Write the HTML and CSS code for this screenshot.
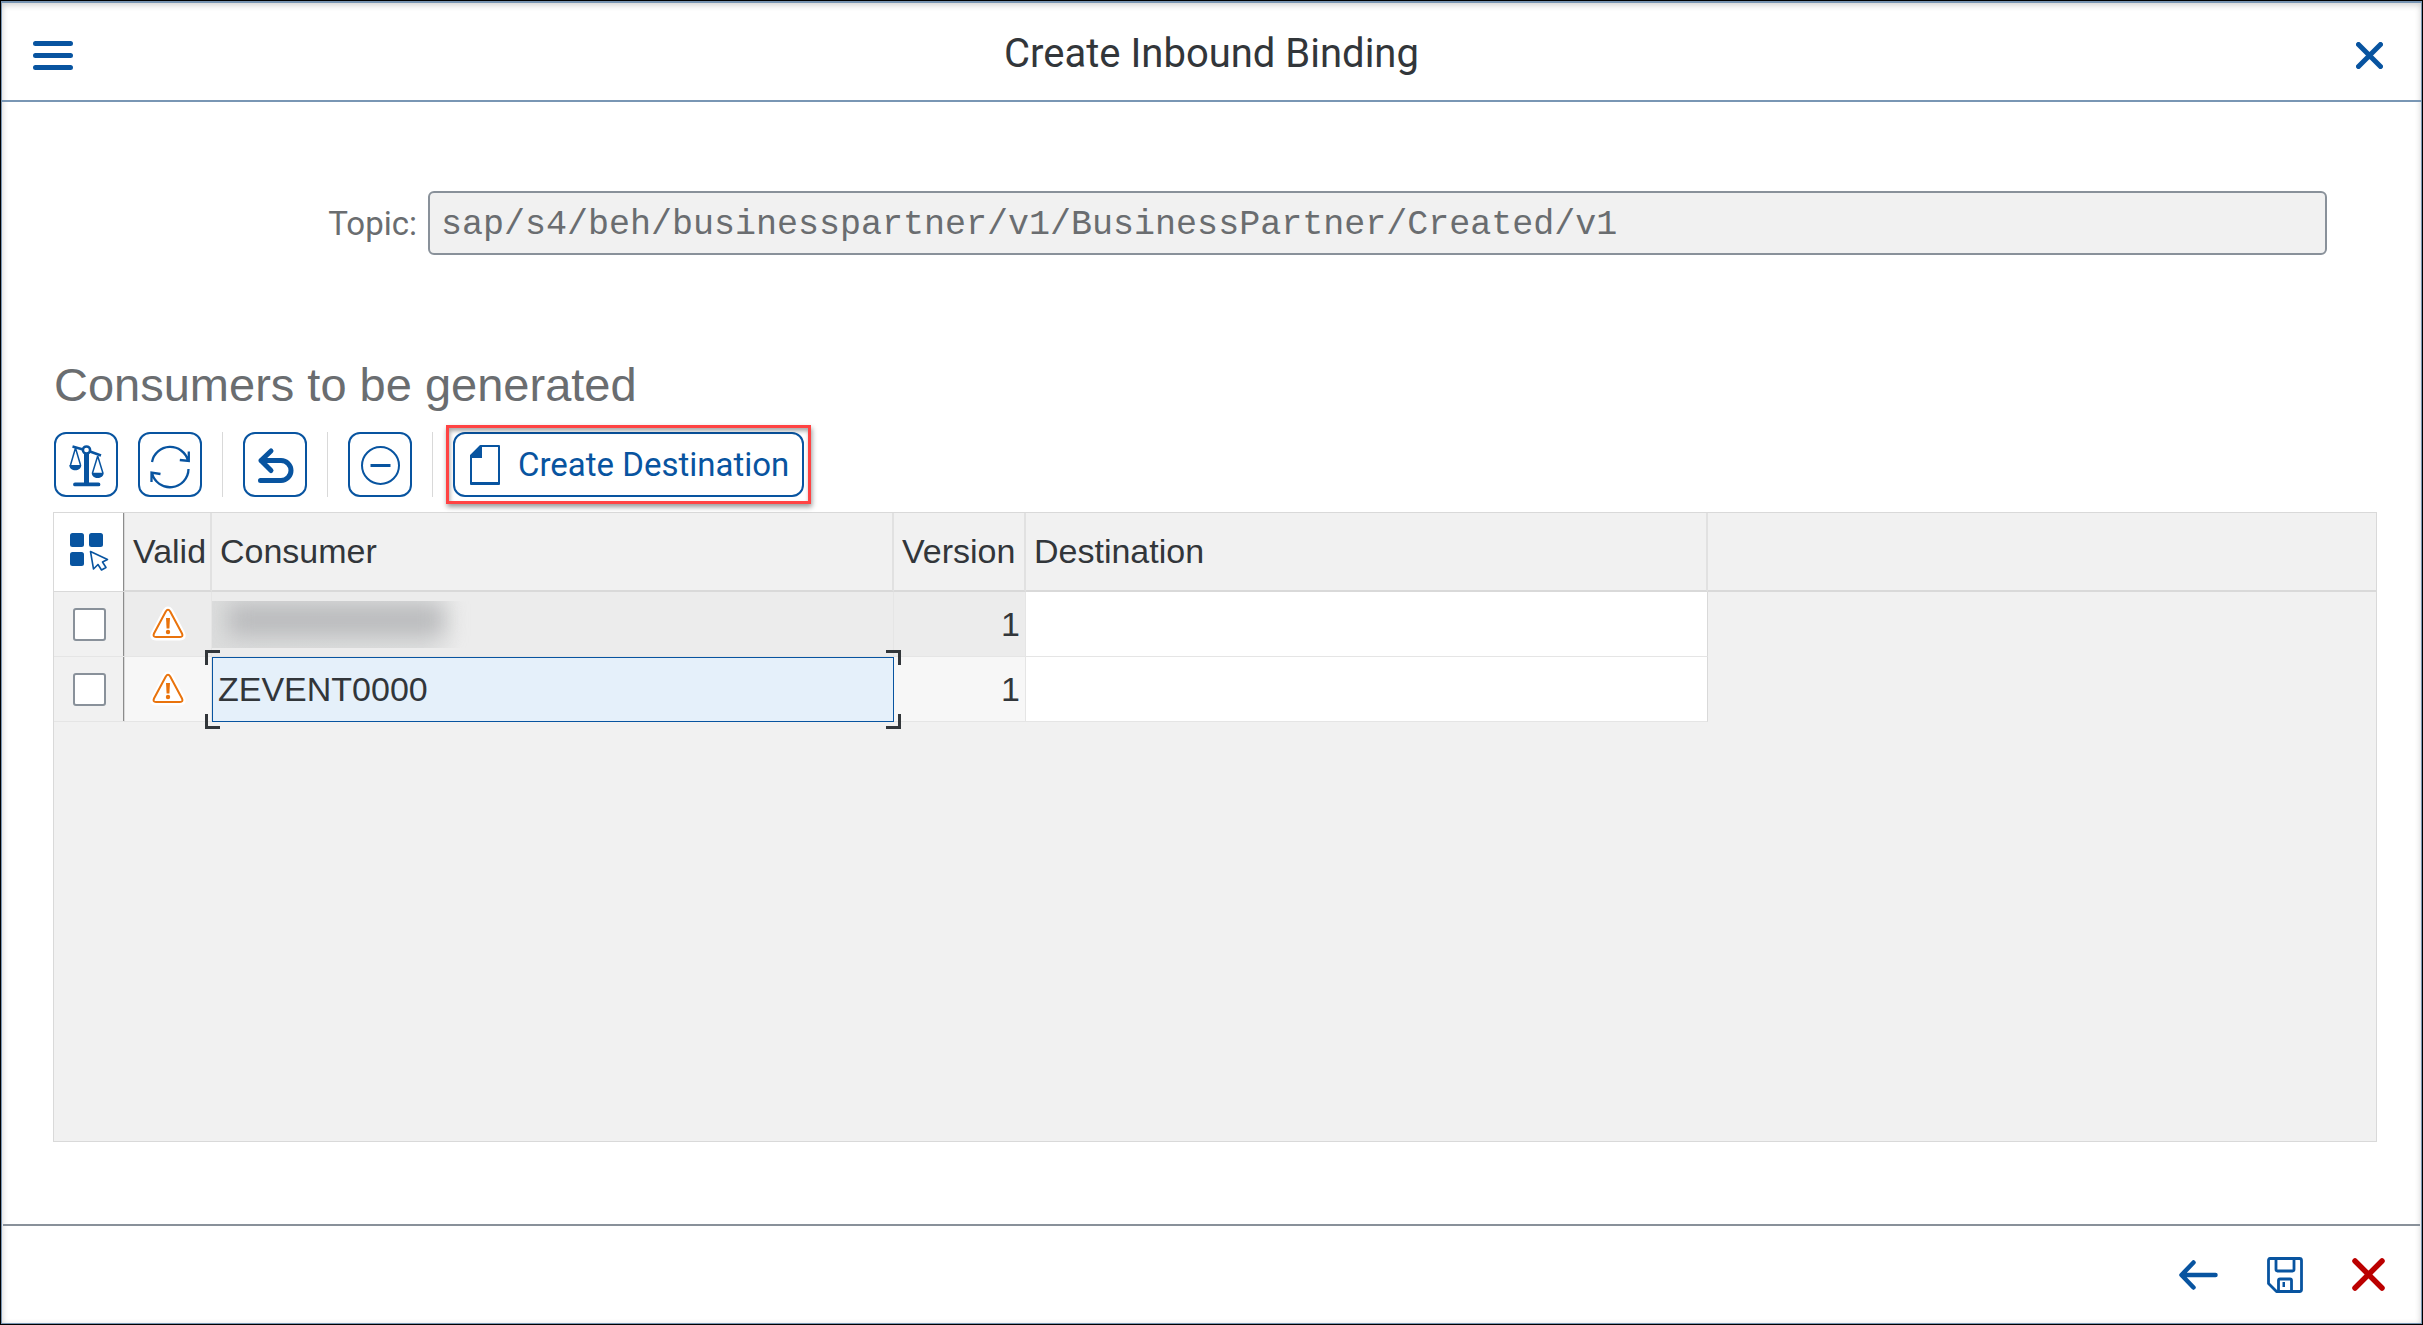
FILE: index.html
```html
<!DOCTYPE html>
<html lang="en">
<head>
<meta charset="utf-8">
<title>Create Inbound Binding</title>
<link rel="stylesheet" href="styles.css">
</head>
<body>
<div class="dialog">
  <header class="dialog-header">
    <button class="icon-button" type="button" aria-label="Menu">
      <svg width="40" height="29" viewBox="0 0 40 29"><path d="M2.5 2.5h35M2.5 14.5h35M2.5 26.5h35" fill="none" stroke="currentColor" stroke-width="5" stroke-linecap="round"/></svg>
    </button>
    <h1 class="dialog-title">Create Inbound Binding</h1>
    <button class="icon-button close" type="button" aria-label="Close">
      <svg width="27" height="27" viewBox="0 0 27 27"><path d="M2.5 2.5l22 22M24.5 2.5l-22 22" fill="none" stroke="currentColor" stroke-width="5" stroke-linecap="round"/></svg>
    </button>
  </header>

  <main class="dialog-body">
    <div class="field">
      <label class="field-label" for="topic">Topic:</label>
      <input class="field-input" id="topic" type="text" readonly value="sap/s4/beh/businesspartner/v1/BusinessPartner/Created/v1">
    </div>

    <h2 class="section-title">Consumers to be generated</h2>

    <div class="toolbar">
      <button class="tool" type="button" aria-label="Check">
        <svg width="60" height="61" viewBox="0 0 60 61"><g fill="none" stroke="currentColor" stroke-width="1.5"><circle cx="30.5" cy="16" r="3.600" stroke-width="2.5"/><path d="M16.5 12.5l10.5 3M34 17.5l11 4" stroke-width="2.5"/><path d="M19.5 14l-5 17M19.5 14l5 17M41.7 22l-5.2 17M41.7 22l5.2 17"/></g><path fill="currentColor" d="M28 20h5v29h-5zM19 48.5h23.500a1.900 1.900 0 0 1 0 3.800H19a1.900 1.900 0 0 1 0-3.800zM13.300 31h12c0 7-12 7-12 0zM35.700 38.700h12c0 7-12 7-12 0z"/></svg>
      </button>
      <button class="tool" type="button" aria-label="Refresh">
        <svg width="60" height="61" viewBox="0 0 60 61"><path fill="none" stroke="currentColor" stroke-width="2.300" d="M12 28a18.500 18.500 0 0 1 36-1.500M48.800 17.500v9.500l-9-1M48.500 35a18.500 18.500 0 0 1-36.500 4M11.500 48v-9.500l9 1.500"/></svg>
      </button>
      <span class="divider"></span>
      <button class="tool" type="button" aria-label="Undo">
        <svg width="60" height="61" viewBox="0 0 60 61"><path fill="none" stroke="currentColor" stroke-width="5" stroke-linecap="round" stroke-linejoin="round" d="M26 17L16 26.500l10 10M16 26.500h20a9.800 9.800 0 0 1 0 20H15.500"/></svg>
      </button>
      <span class="divider"></span>
      <button class="tool" type="button" aria-label="Remove">
        <svg width="60" height="61" viewBox="0 0 60 61"><g fill="none" stroke="currentColor"><circle cx="30.500" cy="31.500" r="18.500" stroke-width="2"/><path d="M20.500 31.500h20" stroke-width="3"/></g></svg>
      </button>
      <span class="divider"></span>
      <div class="highlight">
        <button class="tool tool-text" type="button">
          <svg width="30" height="40" viewBox="0 0 30 40"><path fill="none" stroke="currentColor" stroke-width="2" stroke-linejoin="round" d="M10.500 1H29v38H1V10.500z"/><path fill="currentColor" d="M10 1h2v12H1v-3zM1 37h28v3H1z"/></svg>
          Create Destination
        </button>
      </div>
    </div>

    <div class="grid">
      <table class="table">
        <colgroup>
          <col class="col-select"><col class="col-valid"><col class="col-wide"><col class="col-version"><col class="col-wide"><col>
        </colgroup>
        <thead>
          <tr>
            <th class="select">
              <button class="select-all" type="button" aria-label="Select all">
                <svg width="40" height="40" viewBox="0 0 40 40"><g fill="currentColor"><rect x="1" y="1" width="14" height="14" rx="2.500"/><rect x="20" y="1" width="14" height="14" rx="2.500"/><rect x="1" y="20" width="14" height="14" rx="2.500"/></g><path fill="none" stroke="currentColor" stroke-width="1.600" stroke-linejoin="round" d="M21.500 19.500L38.500 27.500l-5 2.500 3.500 5.500-4.500 2.500-3.500-5.500-4.500 4.500z"/></svg>
              </button>
            </th>
            <th>Valid</th>
            <th>Consumer</th>
            <th>Version</th>
            <th>Destination</th>
            <th class="filler"></th>
          </tr>
        </thead>
        <tbody>
          <tr class="row-odd">
            <td class="select"><input class="check" type="checkbox" aria-label="Select row 1"></td>
            <td class="status"><svg class="warning" width="36" height="36" viewBox="0 0 36 36" role="img" aria-label="Warning"><use href="#warning-shape"/></svg></td>
            <td class="redacted"><div class="smudge"></div></td>
            <td class="number">1</td>
            <td class="editable"></td>
            <td class="filler"></td>
          </tr>
          <tr class="row-even">
            <td class="select"><input class="check" type="checkbox" aria-label="Select row 2"></td>
            <td class="status">
              <svg class="warning" width="36" height="36" viewBox="0 0 36 36" role="img" aria-label="Warning"><g id="warning-shape"><path d="M15.500 5.500Q18 1.500 20.500 5.500L32 27.500Q34 31.500 30 31.500H6Q2 31.500 4 27.500Z" fill="#fff" stroke="#fff" stroke-width="6"/><path d="M15.800 5.500Q18 2 20.200 5.500L32 27.500Q33.500 31 30 31H6Q2.500 31 4 27.500Z" fill="#fff" stroke="#e9730c" stroke-width="2"/><path d="M16 12h4l-.6 10.500h-2.800z" fill="#e9730c"/><circle cx="18" cy="26" r="2.200" fill="#e9730c"/></g></svg>
            </td>
            <td class="focused"><span class="corners-top"></span>ZEVENT0000<span class="corners-bottom"></span></td>
            <td class="number">1</td>
            <td class="editable"></td>
            <td class="filler"></td>
          </tr>
        </tbody>
      </table>
    </div>
  </main>

  <footer class="dialog-footer">
    <button class="icon-button" type="button" aria-label="Back">
      <svg width="39" height="30" viewBox="0 0 39 30"><path d="M36.500 15H3M14.500 2.500L2.500 15l12 12.500" fill="none" stroke="currentColor" stroke-width="4.500" stroke-linecap="round" stroke-linejoin="round"/></svg>
    </button>
    <button class="icon-button" type="button" aria-label="Save">
      <svg width="36" height="36" viewBox="0 0 36 36"><path fill="none" stroke="currentColor" stroke-width="2.800" stroke-linejoin="round" d="M3 1.500h29.500q2 0 2 2v29q0 2-2 2H9.500l-8-8V3.500q0-2 1.500-2zM9 2v10.500q0 1.500 1.500 1.500h15q1.500 0 1.500-1.500V2M11.500 34V23.500q0-1.500 1.500-1.500h10q1.500 0 1.500 1.500V34"/><path fill="currentColor" d="M15.500 25h2.500v5h-2.500z"/></svg>
    </button>
    <button class="icon-button cancel" type="button" aria-label="Cancel">
      <svg width="33" height="33" viewBox="0 0 33 33"><path d="M3 3l27 27M30 3L3 30" fill="none" stroke="currentColor" stroke-width="5.500" stroke-linecap="round"/></svg>
    </button>
  </footer>
</div>
</body>
</html>
```
FILE: styles.css
```css
* {
  box-sizing: border-box;
}

body {
  margin: 0;
  background: #000;
  padding: 1px;
  font-family: "Liberation Sans", Arial, sans-serif;
  font-size: 34px;
  color: #32363a;
}

button {
  margin: 0;
  padding: 0;
  border: 0;
  background: none;
  color: #0854a0;
  font: inherit;
}

svg {
  display: block;
}

.dialog {
  display: flex;
  flex-direction: column;
  min-height: calc(100vh - 2px);
  border: 1px solid #7996b4;
  border-top-width: 2px;
  background: #fff;
  box-shadow: inset 0 2px 6px rgba(0, 0, 0, 0.2);
}

.dialog-header {
  display: grid;
  grid-template-columns: 1fr auto 1fr;
  align-items: center;
  height: 99px;
  padding: 8px 31px 0;
  border-bottom: 2px solid #7996b4;
}

.icon-button {
  justify-self: start;
}

.close {
  justify-self: end;
  padding: 0 7px;
}

.dialog-title {
  margin: 0;
  padding-bottom: 4px;
  font: 400 40px/48px Roboto, sans-serif;
}

.dialog-body {
  display: flex;
  flex: 1;
  flex-direction: column;
  padding: 89px 44px 82px 51px;
}

.field {
  display: grid;
  grid-template-columns: 364px 1fr;
  gap: 11px;
  align-items: center;
  padding-right: 50px;
}

.field-label {
  text-align: right;
  font-family: Roboto, sans-serif;
  font-size: 33px;
  color: #6a6d70;
}

.field-input {
  width: 100%;
  height: 64px;
  padding: 3px 11px 0;
  border: 2px solid #89919a;
  border-radius: 6px;
  outline: 0;
  background: #f1f1f1;
  color: #6a6d70;
  font: 35px "Liberation Mono", "Courier New", monospace;
}

.section-title {
  margin: 102px 0 19px 1px;
  font-size: 47px;
  line-height: 56px;
  font-weight: 400;
  color: #6a6d70;
}

.toolbar {
  display: flex;
  gap: 20px;
  height: 65px;
  margin: 0 0 15px 1px;
}

.tool {
  width: 64px;
  height: 65px;
  border: 2px solid #0854a0;
  border-radius: 12px;
  background: #fff;
}

.divider {
  width: 1px;
  background: #d9d9d9;
}

.tool-text {
  display: flex;
  align-items: center;
  gap: 18px;
  width: auto;
  padding: 0 13px 0 15px;
  font-family: Roboto, sans-serif;
  font-size: 33px;
}

.highlight {
  position: relative;
}

.highlight::after {
  content: "";
  position: absolute;
  inset: -7px;
  border: 3px solid #ff4343;
  box-shadow: 1px 3px 5px rgba(0, 0, 0, 0.4), inset 1px 3px 4px rgba(0, 0, 0, 0.35);
  pointer-events: none;
}

.grid {
  flex: 1;
  border: 1px solid #d9d9d9;
  background: #f1f1f1;
}

.table {
  width: 100%;
  table-layout: fixed;
  border-collapse: separate;
  border-spacing: 0;
}

.col-select {
  width: 71px;
}

.col-valid {
  width: 87px;
}

.col-wide {
  width: 682px;
}

.col-version {
  width: 132px;
}

th {
  height: 79px;
  padding: 0 0 0 8px;
  border-right: 2px solid #e1e1e1;
  border-bottom: 2px solid #d9d9d9;
  text-align: left;
  font-weight: 400;
}

td {
  height: 65px;
  padding: 0;
  border-right: 1px solid #e5e5e5;
  border-bottom: 1px solid #e5e5e5;
}

.select {
  padding: 0;
  border-right: 1px solid #d9d9d9;
  box-shadow: inset -1px 0 #8c8c8c;
}

th.select {
  border-bottom-width: 1px;
  background: #fff;
}

.select-all {
  display: block;
  margin: 0 auto;
}

.check {
  display: block;
  width: 33px;
  height: 33px;
  margin: 0 auto;
  border: 2px solid #89919a;
  border-radius: 3px;
  background: #fff;
  appearance: none;
}

.warning {
  margin: 0 auto;
}

.row-odd td {
  background: #ececec;
}

.row-even td {
  background: #f7f7f7;
}

.row-odd .select,
.row-even .select {
  background: #f1f1f1;
}

.row-odd .editable,
.row-even .editable {
  border-right-color: #d9d9d9;
  background: #fff;
}

th.filler {
  border-right: 0;
}

.row-odd .filler,
.row-even .filler {
  border: 0;
  background: none;
}

.number {
  padding-right: 5px;
  text-align: right;
}

/* Hidden consumer name */
.smudge {
  width: 260px;
  height: 47px;
  overflow: hidden;
  background: linear-gradient(90deg, #dcdddd 0, #dfe0e0 210px, #ececec 250px);
}

.smudge::before {
  content: "";
  display: block;
  width: 216px;
  height: 32px;
  margin: 3px 0 0 16px;
  background: #b9babc;
  filter: blur(11px);
}

.row-even .focused {
  position: relative;
  padding-left: 5px;
  border: 1px solid #0854a0;
  background: #e5f0fa;
}

.corners-top,
.corners-bottom {
  position: absolute;
  left: -8px;
  right: -8px;
  height: 15px;
  border: solid #32363a;
  clip-path: polygon(0 0, 15px 0, 15px 100%, calc(100% - 15px) 100%, calc(100% - 15px) 0, 100% 0, 100% 100%, 0 100%);
}

.corners-top {
  top: -8px;
  border-width: 3px 3px 0;
}

.corners-bottom {
  bottom: -8px;
  border-width: 0 3px 3px;
  clip-path: polygon(0 0, 15px 0, 15px 100%, 0 100%, 0 0, 100% 0, 100% 100%, calc(100% - 15px) 100%, calc(100% - 15px) 0);
}

.dialog-footer {
  display: flex;
  align-items: center;
  justify-content: flex-end;
  gap: 49px;
  height: 99px;
  margin: 0 1px;
  padding-right: 35px;
  border-top: 2px solid #89919a;
}

.cancel {
  color: #b00;
}
```
